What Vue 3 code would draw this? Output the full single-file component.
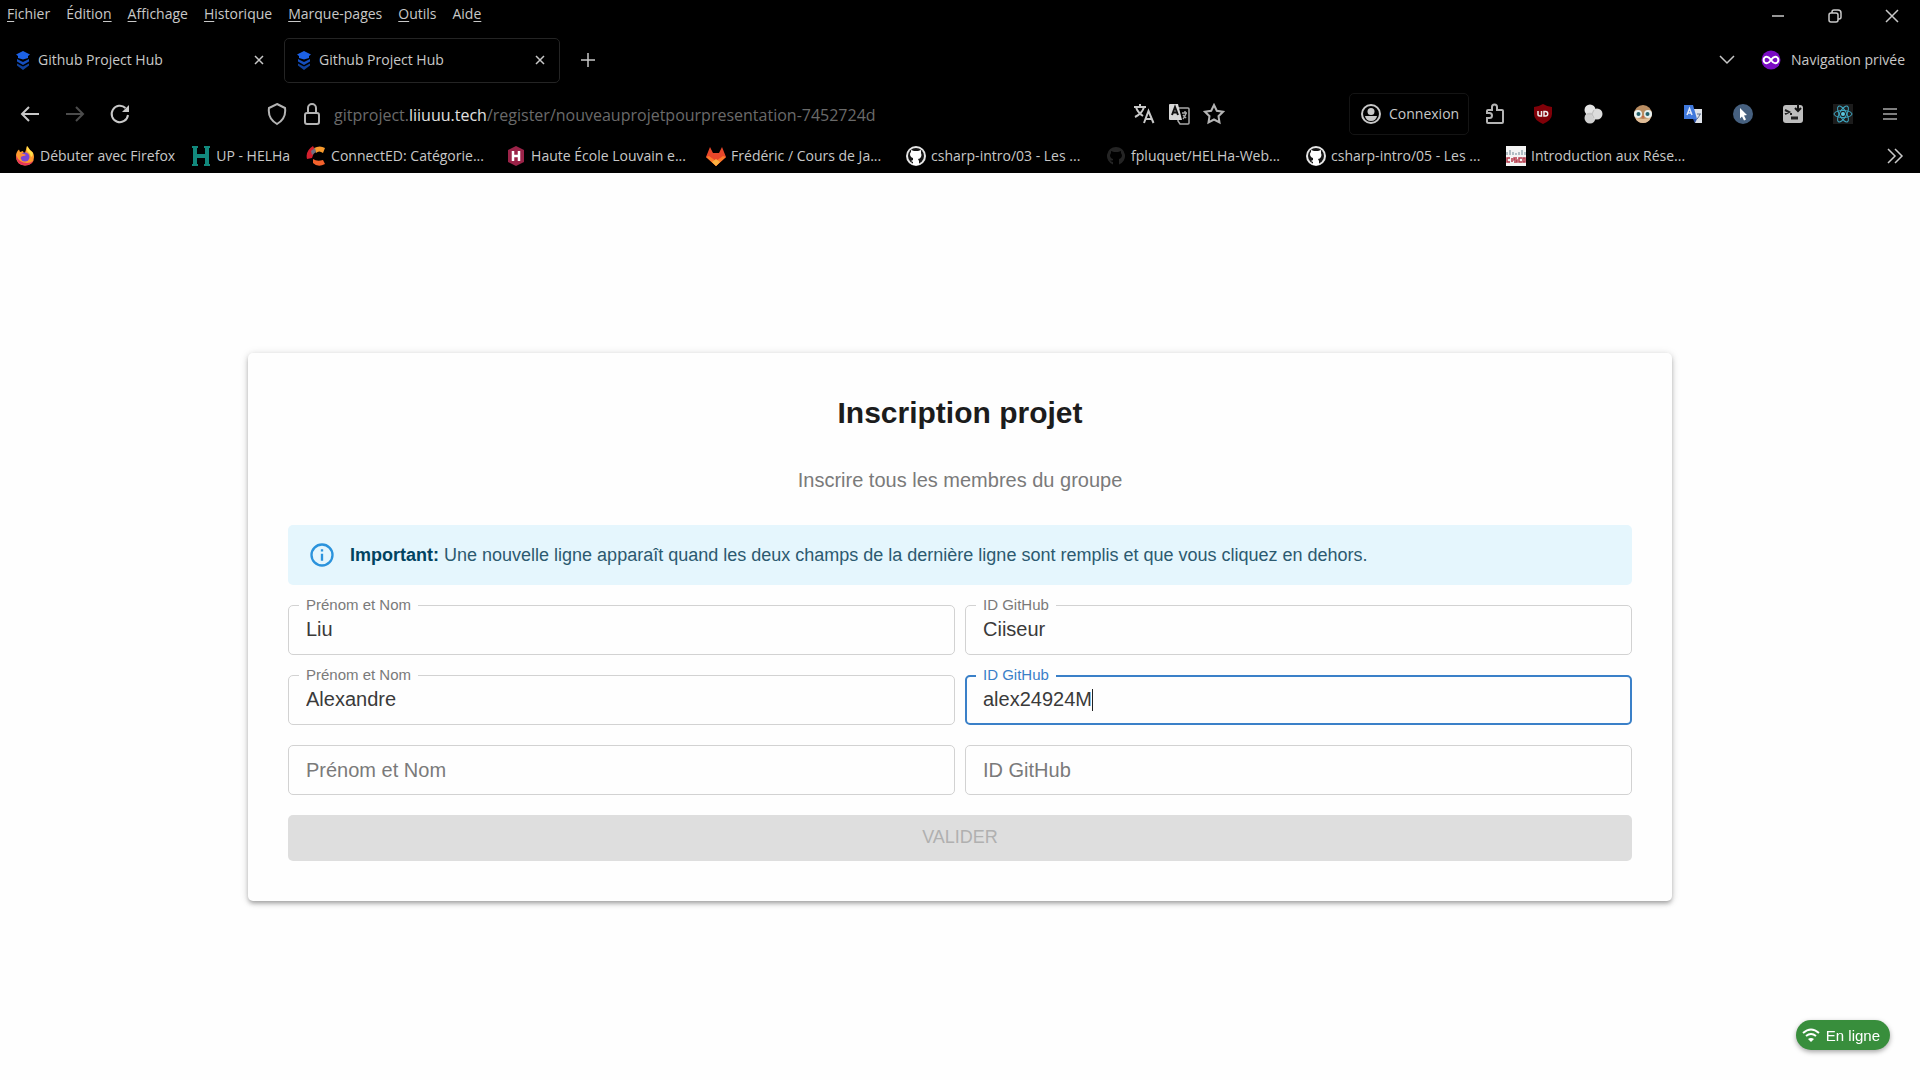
<script setup>
import { ref, computed, onMounted } from 'vue'

const menus = [
	{ before: '', key: 'F', after: 'ichier' },
	{ before: 'Éditio', key: 'n', after: '' },
	{ before: '', key: 'A', after: 'ffichage' },
	{ before: '', key: 'H', after: 'istorique' },
	{ before: '', key: 'M', after: 'arque-pages' },
	{ before: '', key: 'O', after: 'utils' },
	{ before: 'Aid', key: 'e', after: '' }
]

const tabs = [
	{ id: 1, title: 'Github Project Hub', active: false },
	{ id: 2, title: 'Github Project Hub', active: true }
]

const bookmarks = [
	{ icon: 'firefox', title: 'Débuter avec Firefox', short: true },
	{ icon: 'up', title: 'UP - HELHa', short: true },
	{ icon: 'connected', title: 'ConnectED: Catégorie...' },
	{ icon: 'helha', title: 'Haute École Louvain e...' },
	{ icon: 'gitlab', title: 'Frédéric / Cours de Ja...' },
	{ icon: 'github', title: 'csharp-intro/03 - Les ...' },
	{ icon: 'github-dark', title: 'fpluquet/HELHa-Web...' },
	{ icon: 'github', title: 'csharp-intro/05 - Les ...' },
	{ icon: 'cisco', title: 'Introduction aux Rése...' }
]

const members = ref([
	{ name: 'Liu', github: 'Ciiseur' },
	{ name: 'Alexandre', github: 'alex24924M' },
	{ name: '', github: '' }
])

const fields = [
	{ key: 'name', label: 'Prénom et Nom' },
	{ key: 'github', label: 'ID GitHub' }
]

const focused = ref('github-1')
const caretLeft = ref(0)

const isShrunk = (member, field, i) => {
	return member[field.key] !== '' || focused.value === `${field.key}-${i}`
}

// Place the caret right after the typed text
const updateCaret = () => {
	const [key, i] = focused.value.split('-')
	if (!key) return
	const ctx = document.createElement('canvas').getContext('2d')
	ctx.font = '20px "Liberation Sans", Arial, sans-serif'
	caretLeft.value = 18 + Math.round(ctx.measureText(members.value[i][key]).width)
}

const onFocus = (id) => {
	focused.value = id
	updateCaret()
}

// Add an empty row once both fields of the last one are filled
const onBlur = () => {
	focused.value = ''
	const last = members.value[members.value.length - 1]
	if (last.name && last.github) {
		members.value.push({ name: '', github: '' })
	}
}

// Nothing can be sent while a field is being edited
const canSubmit = computed(() => {
	return focused.value === '' && members.value.some(m => m.name && m.github)
})

onMounted(() => {
	document.getElementById('github-1').focus()
	updateCaret()
})
</script>

<template>
	<div class="screen">
		<header class="browser">
			<!-- Menu bar -->
			<div class="menu-bar">
				<nav class="menus">
					<button v-for="m in menus" :key="m.key" type="button" class="menu">{{ m.before }}<u>{{ m.key }}</u>{{ m.after }}</button>
				</nav>
				<div class="window-controls">
					<button type="button" aria-label="Réduire">
						<svg width="14" height="14" viewBox="0 0 14 14"><path d="M1 7h12" class="line" /></svg>
					</button>
					<button type="button" aria-label="Restaurer">
						<svg width="14" height="14" viewBox="0 0 14 14"><rect x="1" y="4" width="9" height="9" rx="2" class="line" /><path d="M4 4V3q0-2 2-2h4q3 0 3 3v4q0 2-2 2h-1" class="line" /></svg>
					</button>
					<button type="button" aria-label="Fermer">
						<svg width="14" height="14" viewBox="0 0 14 14"><path d="M1 1l12 12M13 1L1 13" class="line" /></svg>
					</button>
				</div>
			</div>

			<!-- Tabs -->
			<div class="tab-bar">
				<div v-for="tab in tabs" :key="tab.id" class="tab" :class="{ active: tab.active }">
					<svg width="14" height="20" viewBox="0 0 14 20">
						<path d="M7 1l7 3.500-2 1.500v2L7 9.500 2 8V6L0 4.500z" fill="#1c62e8" />
						<path d="M1 9l6 3 6-3v2.500l-6 3.500-6-3.500z" fill="#154fc0" />
						<path d="M1 13.500l6 3 6-3v2L7 20l-6-4.500z" fill="#10429e" />
					</svg>
					<span class="tab-title">{{ tab.title }}</span>
					<button type="button" class="tab-close" aria-label="Fermer l'onglet">
						<svg width="12" height="12" viewBox="0 0 12 12"><path d="M2 2l8 8M10 2L2 10" class="line" /></svg>
					</button>
				</div>
				<button type="button" class="tab-new" aria-label="Nouvel onglet">
					<svg width="16" height="16" viewBox="0 0 16 16"><path d="M8 1v14M1 8h14" class="line" /></svg>
				</button>
				<button type="button" class="tab-list" aria-label="Lister les onglets">
					<svg width="18" height="12" viewBox="0 0 18 12"><path d="M2 2l7 7 7-7" class="line" /></svg>
				</button>
				<div class="private">
					<svg width="20" height="20" viewBox="0 0 20 20">
						<circle cx="10" cy="10" r="9.500" fill="#7a0bc4" />
						<path d="M10 10C8 7 7 6.800 5.800 6.800a3.200 3.200 0 0 0 0 6.400C7 13.200 8 13 10 10s3-3.200 4.200-3.200a3.200 3.200 0 0 1 0 6.400C13 13.200 12 13 10 10z" fill="none" stroke="#fff" stroke-width="2" />
					</svg>
					<span>Navigation privée</span>
				</div>
			</div>

			<!-- Address bar -->
			<div class="nav-bar">
				<button type="button" class="nav-btn" aria-label="Reculer">
					<svg width="20" height="20" viewBox="0 0 20 20"><path d="M19 10H2M9 3l-7 7 7 7" class="line thick" /></svg>
				</button>
				<button type="button" class="nav-btn" aria-label="Avancer" disabled>
					<svg width="20" height="20" viewBox="0 0 20 20"><path d="M1 10h17M11 3l7 7-7 7" class="line dim" /></svg>
				</button>
				<button type="button" class="nav-btn" aria-label="Actualiser">
					<svg width="22" height="22" viewBox="0 0 22 22"><path d="M16.500 5A8.200 8.200 0 1 0 19 12" class="line thick" /><path d="M20 2v7h-7z" fill="#c8c8c8" /></svg>
				</button>

				<div class="url-bar">
					<button type="button" class="url-btn" aria-label="Protection">
						<svg width="20" height="24" viewBox="0 0 20 24"><path d="M10 2l8 4c1 7-1 12-8 16C3 18 1 13 2 6z" class="line gray" /></svg>
					</button>
					<button type="button" class="url-btn" aria-label="Connexion sécurisée">
						<svg width="18" height="24" viewBox="0 0 18 24"><rect x="2" y="11" width="14" height="11" rx="2" class="line gray" /><path d="M5 11V6a4 4 0 0 1 8 0v5" class="line gray" /></svg>
					</button>
					<div class="url">gitproject.<b>liiuuu.tech</b>/register/nouveauprojetpourpresentation-7452724d</div>
					<button type="button" class="url-btn" aria-label="Traduire la page">
						<svg width="22" height="22" viewBox="0 0 22 22"><path d="M1 4h12M7 1v3M3 4c1 4 4 7 7 9M11 4c-1 4-5 8-9 10" class="line thick" /><path d="M11 20l4.500-12L20.500 20M12.500 16h6.500" class="line thick" /></svg>
					</button>
					<button type="button" class="url-btn" aria-label="Traduction">
						<svg width="22" height="22" viewBox="0 0 22 22">
							<path d="M10 5h10q1 0 1 1v14q0 1-1 1h-8l-2-3z" class="line edge" />
							<path d="M2 1h8l4 16H2q-1 0-1-1V2q0-1 1-1z" fill="#d8d8d8" />
							<path d="M4 12l3-8 3 8M5 9.500h4" fill="none" stroke="#111" stroke-width="2" />
							<path d="M14 10h5M17 8v2M18 10c-1 3-1 4-3 6M15 12l3 3" class="line edge" />
						</svg>
					</button>
					<button type="button" class="url-btn" aria-label="Ajouter un marque-page">
						<svg width="22" height="22" viewBox="0 0 22 22"><path d="M11 2l2.800 5.800 6.200 1-4.500 4.400 1 6.300-5.500-3-5.500 3 1-6.300L2 8.800l6.200-1z" class="line gray" /></svg>
					</button>
				</div>

				<button type="button" class="account">
					<svg width="22" height="22" viewBox="0 0 22 22"><circle cx="11" cy="11" r="9" class="line thick" /><circle cx="11" cy="8.500" r="3.500" fill="#c8c8c8" /><path d="M5 13h12q-1 5-6 5t-6-5z" fill="#c8c8c8" /></svg>
					<span>Connexion</span>
				</button>
				<button type="button" class="ext-btn first" aria-label="Extensions">
					<svg width="20" height="22" viewBox="0 0 20 22"><path d="M3 20q-1 0-1-1v-4h2.500a2.500 2.500 0 0 0 0-5H2V8q0-1 1-1h4V4a2.500 2.500 0 0 1 5 0v3h5q1 0 1 1v11q0 1-1 1z" class="line gray" /></svg>
				</button>
				<button type="button" class="ext-btn" aria-label="uBlock Origin">
					<svg width="20" height="20" viewBox="0 0 20 20"><path d="M10 0q5 3 9 3v7q0 6-9 10Q1 16 1 10V3q4 0 9-3z" fill="#800008" /><path d="M5 7v3.500q0 1.500 2 1.500h1.500V7" fill="none" stroke="#eee" stroke-width="1.500" /><path d="M11 7.500h1.500a2 2 0 0 1 0 4.500H11z" fill="none" stroke="#eee" stroke-width="1.500" /></svg>
				</button>
				<button type="button" class="ext-btn" aria-label="Extension">
					<svg width="20" height="20" viewBox="0 0 20 20"><circle cx="7" cy="6" r="5.500" fill="#e4e4e4" /><circle cx="7" cy="14" r="5.500" fill="#d0d0d0" /><circle cx="14" cy="10" r="5.500" fill="#dcdcdc" /><path d="M9 10l2-4M9 10l2 4M4 10h5" stroke="#bbb" /></svg>
				</button>
				<button type="button" class="ext-btn" aria-label="Extension">
					<svg width="20" height="20" viewBox="0 0 20 20"><circle cx="10" cy="10" r="9" fill="#b98d62" /><path d="M2 13q8 4 16 0-2 6-8 6t-8-6z" fill="#e0bd98" /><circle cx="5" cy="10" r="4" fill="#e8f0f0" /><circle cx="15" cy="10" r="4" fill="#e8f0f0" /><circle cx="5.500" cy="10" r="2" fill="#22606b" /><circle cx="14.500" cy="10" r="2" fill="#22606b" /><path d="M9 12l1 3 1-3z" fill="#d05a3a" /></svg>
				</button>
				<button type="button" class="ext-btn" aria-label="Google Traduction">
					<svg width="20" height="20" viewBox="0 0 20 20"><path d="M10 5h9v14h-7z" fill="#dfe3ea" /><path d="M1 1h9l4 14H1z" fill="#3f78dc" /><path d="M4 11l2.500-6.500L9 11M5 9h3" fill="none" stroke="#dfe8fa" stroke-width="1.500" /><path d="M10 15h4l-2 4z" fill="#2a4fa8" /><path d="M14 10h4M17 10q-1 3-3 5" fill="none" stroke="#5b6d8c" /></svg>
				</button>
				<button type="button" class="ext-btn" aria-label="Extension">
					<svg width="20" height="20" viewBox="0 0 20 20"><circle cx="10" cy="10" r="10" fill="#46607f" /><path d="M7 4l7 7-3 .5 2 4-2 1-2-4-2 2z" fill="#fff" /></svg>
				</button>
				<button type="button" class="ext-btn" aria-label="Extension">
					<svg width="20" height="20" viewBox="0 0 20 20"><rect x="0" y="1" width="20" height="18" rx="3" fill="#bdbdbd" /><path d="M2 6l4 2-4 2M7 10h2" fill="none" stroke="#222" stroke-width="2" /><path d="M8 14h7" stroke="#222" stroke-width="3" /><path d="M15 0v6M12 4l3 3 3-3" fill="none" stroke="#111" stroke-width="2" /></svg>
				</button>
				<button type="button" class="ext-btn" aria-label="React Developer Tools">
					<svg width="20" height="20" viewBox="0 0 20 20"><rect width="20" height="20" fill="#1c1c1c" /><g fill="none" stroke="#3fa9c4"><ellipse cx="10" cy="10" rx="9" ry="3.500" /><ellipse cx="10" cy="10" rx="9" ry="3.500" transform="rotate(60 10 10)" /><ellipse cx="10" cy="10" rx="9" ry="3.500" transform="rotate(120 10 10)" /></g><circle cx="10" cy="10" r="2" fill="#5cc9e2" /></svg>
				</button>
				<button type="button" class="ext-btn last" aria-label="Menu">
					<svg width="16" height="14" viewBox="0 0 16 14"><path d="M1 2h14M1 7h14M1 12h14" class="line edge" /></svg>
				</button>
			</div>

			<!-- Bookmarks -->
			<div class="bookmark-bar">
				<a v-for="(b, i) in bookmarks" :key="i" href="#" class="bookmark" :class="{ short: b.short }">
					<svg v-if="b.icon === 'firefox'" width="20" height="20" viewBox="0 0 20 20">
						<path d="M12 0q2 2 3 4 4 2 4 7 0 8-9 8.500Q1 19 1 10q0-4 3-6.500L5 6l3-1q0 2 2 2z" fill="#ff9a2e" />
						<path d="M1 9q0 10 9 10.500 6 0 8.500-5Q16 17 12 17 4 17 1 9z" fill="#e8365a" />
						<path d="M12 0q-1 4 1 6 3 2 3 5 2-1 2-4-3-2-6-7z" fill="#ffe14a" />
						<circle cx="10" cy="11" r="4.500" fill="#7a45d8" />
						<path d="M5 8q3-1 6 1-1 1-3 1t-3 3z" fill="#ff8a3a" />
					</svg>
					<svg v-else-if="b.icon === 'up'" width="20" height="20" viewBox="0 0 20 20"><path d="M1 0h6v2H6v6h8V2h-1V0h6v2h-1v16h1v2h-6v-2h1v-6H6v6h1v2H1v-2h1V2H1z" fill="#12897d" /></svg>
					<svg v-else-if="b.icon === 'connected'" width="20" height="20" viewBox="0 0 20 20">
						<path d="M8 2q6-3 11 0l-2 5q-4-3-7 0z" fill="#f79a2c" /><path d="M7 13q4 3 10 1l2 4q-7 4-12-1z" fill="#f4622c" /><path d="M1 13Q-1 5 7 0l2 4-3 8z" fill="#d3202e" /><path d="M5 5l4-3 1 4-4 3z" fill="#6f6f80" />
					</svg>
					<svg v-else-if="b.icon === 'helha'" width="20" height="20" viewBox="0 0 20 20"><path d="M10 0l8 4v12l-8 4-8-4V4z" fill="#9b2348" /><path d="M7 5v10M13 5v10M7 10h6" fill="none" stroke="#fff" stroke-width="2.500" /></svg>
					<svg v-else-if="b.icon === 'gitlab'" width="20" height="20" viewBox="0 0 20 20"><path d="M4 1l3 6h6l3-6 4 10-10 9L0 11z" fill="#e8472a" /><path d="M0 11l10 9 10-9-3-1-7 5-7-5z" fill="#fc7a2a" /><path d="M6 16l4-3 4 3-4 4z" fill="#fcb040" /></svg>
					<svg v-else-if="b.icon === 'cisco'" width="20" height="20" viewBox="0 0 20 20">
						<rect width="20" height="20" fill="#f4f4f4" /><path d="M1 6v3M4 4v5M7 6v3M10 7v2M13 6v3M16 4v5M19 6v3" stroke="#6f8794" />
						<path d="M4 12H1v4h3M6 12v4M11 12H8v2h3v2H8M16 12h-3v4h3M19 12h-2v4h2z" fill="none" stroke="#b5384a" stroke-width="1.500" />
					</svg>
					<svg v-else width="20" height="20" viewBox="0 0 20 20">
						<circle v-if="b.icon === 'github'" cx="10" cy="10" r="10" fill="#e6e6e6" />
						<circle v-if="b.icon === 'github'" cx="10" cy="10" r="8" fill="#161616" />
						<path v-if="b.icon === 'github'" d="M5 4l3 1h4l3-1v3q1 2 0 4-1 2-3 2l1 2v4H7v-3l-2-1 2-1v-2q-3-1-3-4 0-1 1-2z" fill="#fff" />
						<path v-else d="M10 1a9 9 0 0 0-3 17.500V16q-2 0-3-2 2 1 3 0v-1q-3-1-3-4l1-2V5l3 1h4l3-1v2l1 2q0 3-3 4v5.500A9 9 0 0 0 10 1z" fill="#242424" />
					</svg>
					<span>{{ b.title }}</span>
				</a>
				<button type="button" class="overflow" aria-label="Autres marque-pages">
					<svg width="18" height="16" viewBox="0 0 18 16"><path d="M2 1l7 7-7 7M9 1l7 7-7 7" class="line" /></svg>
				</button>
			</div>
		</header>

		<!-- Registration form -->
		<main class="page">
			<form class="card" @submit.prevent>
				<h1 class="title">Inscription projet</h1>
				<p class="subtitle">Inscrire tous les membres du groupe</p>

				<div class="alert" role="alert">
					<svg width="28" height="28" viewBox="0 0 24 24"><path fill="#2b93dc" d="M11 7h2v2h-2zm0 4h2v6h-2zm1-9a10 10 0 1 0 0 20 10 10 0 0 0 0-20zm0 18a8 8 0 1 1 0-16 8 8 0 0 1 0 16z" /></svg>
					<p><strong>Important:</strong> Une nouvelle ligne apparaît quand les deux champs de la dernière ligne sont remplis et que vous cliquez en dehors.</p>
				</div>

				<div v-for="(member, i) in members" :key="i" class="row">
					<div
						v-for="field in fields"
						:key="field.key"
						class="field"
						:class="{ shrunk: isShrunk(member, field, i), focused: focused === `${field.key}-${i}` }"
					>
						<input
							:id="`${field.key}-${i}`"
							v-model="member[field.key]"
							type="text"
							autocomplete="off"
							@focus="onFocus(`${field.key}-${i}`)"
							@blur="onBlur"
							@input="updateCaret"
						/>
						<label :for="`${field.key}-${i}`">{{ field.label }}</label>
						<span v-if="focused === `${field.key}-${i}`" class="caret" :style="{ left: caretLeft + 'px' }"></span>
					</div>
				</div>

				<button type="submit" class="submit" :disabled="!canSubmit">VALIDER</button>
			</form>

			<div class="status">
				<svg width="18" height="14" viewBox="0 0 18 14"><path d="M1 5q8-7 16 0M4 8q5-4 10 0" fill="none" stroke="#fff" stroke-width="2" /><path d="M6 11q3-2 6 0l-3 3z" fill="#fff" /></svg>
				<span>En ligne</span>
			</div>
		</main>
	</div>
</template>

<style>
body { margin: 0; background: #fefefe; }
</style>

<style scoped>
.screen { min-height: 100vh; display: flex; flex-direction: column; }
button { font: inherit; color: inherit; background: none; border: 0; padding: 0; margin: 0; }
svg { display: block; flex: none; }

/* Browser */
.browser { background: #000; color: #c8c8c8; font-family: "Open Sans", "Noto Sans", sans-serif; font-size: 14px; line-height: 20px; white-space: nowrap; }
.line { fill: none; stroke: #c8c8c8; stroke-width: 1.5; }
.thick { stroke-width: 2; }
.gray { stroke: #b4b4b4; stroke-width: 2; }
.edge { stroke: #a8a8a8; }
.dim { stroke: #4c4c4c; stroke-width: 2; }

.menu-bar { display: flex; justify-content: space-between; height: 32px; }
.menus { display: flex; gap: 16px; padding-left: 7px; height: 28px; }
.menu u { text-underline-offset: 2px; }
.window-controls { display: flex; }
.window-controls button { width: 57px; height: 32px; display: flex; align-items: center; justify-content: center; }

.tab-bar { display: flex; align-items: center; gap: 5px; height: 56px; padding: 0 15px 0 3px; }
.tab { box-sizing: border-box; display: flex; align-items: center; gap: 8px; width: 276px; height: 45px; padding: 0 12px; border: 1px solid transparent; border-radius: 5px; }
.tab.active { border-color: #242424; }
.tab-title { flex: 1; }
.tab-close { width: 14px; display: flex; justify-content: center; }
.tab-new { width: 45px; display: flex; justify-content: center; }
.tab-list { margin-left: auto; width: 45px; display: flex; justify-content: center; }
.private { display: flex; align-items: center; gap: 10px; padding-left: 7px; }

.nav-bar { display: flex; align-items: center; height: 51px; padding: 0 8px 0 7px; }
.nav-btn { width: 45px; display: flex; justify-content: center; }
.url-bar { flex: 1; display: flex; align-items: center; margin: 0 118px 0 117px; min-width: 0; }
.url-btn { width: 35px; display: flex; justify-content: center; }
.url { flex: 1; padding: 2px 0 0 5px; font-size: 16px; color: #6a6a6a; overflow: hidden; }
.url b { font-weight: 400; color: #e0e0e0; }
.account { box-sizing: border-box; display: flex; align-items: center; gap: 7px; height: 42px; width: 120px; padding-left: 10px; margin-right: 3px; border: 1px solid #141414; border-radius: 5px; }
.ext-btn { width: 50px; display: flex; justify-content: center; }
.ext-btn.first { width: 46px; }
.ext-btn.last { width: 44px; }

.bookmark-bar { display: flex; align-items: center; gap: 16px; height: 34px; padding: 0 16px 0 15px; }
.bookmark { display: flex; align-items: center; gap: 5px; width: 184px; color: inherit; text-decoration: none; }
.bookmark.short { width: auto; }
.overflow { margin-left: auto; }

/* Page */
.page { flex: 1; display: flex; align-items: center; justify-content: center; padding: 0 40px; font-family: "Liberation Sans", Arial, sans-serif; }
.card { box-sizing: border-box; width: 100%; max-width: 1424px; display: flex; flex-direction: column; gap: 20px; padding: 40px; border-radius: 5px; background: #fefefe; box-shadow: 0 3px 4px -1px rgba(0, 0, 0, 0.26), 0 2px 6px rgba(0, 0, 0, 0.12), 0 1px 10px rgba(0, 0, 0, 0.1); }
.title { margin: 0 0 12px; font-size: 30px; line-height: 40px; font-weight: 700; text-align: center; color: #1c1c1c; }
.subtitle { margin: 0 0 10px; font-size: 20px; line-height: 30px; text-align: center; color: #7a7a7a; }

.alert { display: flex; align-items: center; gap: 14px; height: 60px; padding: 0 20px; border-radius: 5px; background: #e5f6fd; color: #2c5a70; font-size: 18px; line-height: 26px; }
.alert p { margin: 0; }
.alert strong { color: #014361; }

/* Fields */
.row { display: grid; grid-template-columns: 1fr 1fr; gap: 10px; }
.field { position: relative; }
.field input { box-sizing: border-box; display: block; width: 100%; height: 50px; padding: 0 17px; border: 1px solid #d2d2d2; border-radius: 5px; outline: none; background: transparent; font-family: inherit; font-size: 20px; color: #3a3a3a; caret-color: transparent; }
.field label { position: absolute; left: 11px; top: 10px; padding: 0 7px; font-size: 20px; line-height: 30px; color: #7a7a7a; background: #fefefe; pointer-events: none; }
.field.shrunk label { top: -10px; font-size: 15px; line-height: 20px; }
.field.focused input { border: 2px solid #3a80c8; padding: 0 16px; }
.field.focused label { color: #3a80c8; }
.caret { position: absolute; top: 14px; width: 1px; height: 22px; background: #222; }

.submit { height: 46px; border-radius: 5px; font-size: 18px; color: #1976d2; cursor: pointer; }
.submit:disabled { background: #dedede; color: #b0b0b0; cursor: default; }

.status { position: fixed; right: 30px; bottom: 30px; display: flex; align-items: center; gap: 6px; height: 30px; padding: 0 10px 0 6px; border-radius: 15px; background: #388e3c; color: #fff; font-size: 15px; box-shadow: 0 2px 5px rgba(0, 0, 0, 0.35); }
</style>
